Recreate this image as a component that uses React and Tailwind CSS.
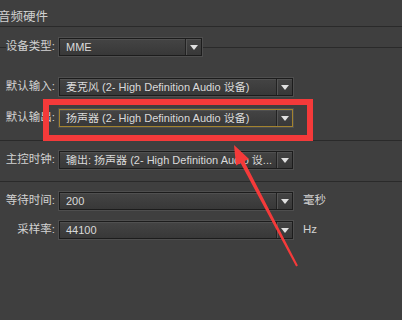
import React from 'react';

const font = { fontFamily: '"Liberation Sans", "Noto Sans CJK SC", sans-serif' };

function Select({ value, width = 'w-[234px]', active = false }) {
    return (
        <div
            className={`flex items-center h-[18px] ${width} border ${active ? 'border-[#a3832f]' : 'border-[#1c1c1c]'} bg-gradient-to-b from-[#444] to-[#383838] shadow-[0_0_0_1px_#4e4e4e,inset_0_1px_0_#505050]`}
        >
            <span className="flex-1 overflow-hidden whitespace-nowrap pl-[6px] text-[11px] leading-none text-[#dadada]">{value}</span>
            <div className="flex items-center justify-center w-[16px] h-full border-l border-[#222] shadow-[inset_1px_0_0_#555]">
                <div className="w-0 h-0 border-l-[4px] border-r-[4px] border-t-[5px] border-l-transparent border-r-transparent border-t-[#e0e0e0]" />
            </div>
        </div>
    );
}

function Row({ label, children, unit, className = '' }) {
    return (
        <div className={`flex items-center ${className}`}>
            <div className="w-[55px] text-right whitespace-nowrap text-[11.5px] text-[#d2d2d2] leading-none">{label}</div>
            <div className="ml-[4px]">{children}</div>
            {unit && <span className="ml-[10px] text-[11.5px] text-[#d2d2d2] leading-none">{unit}</span>}
        </div>
    );
}

export default function App() {
    return (
        <div className="relative w-[402px] h-[320px] overflow-hidden bg-[#3f3f3f]" style={font}>
            <div className="h-[27px] border-b border-[#2a2a2a] pt-[11px]">
                <span className="-ml-[2px] block text-[12.5px] leading-none text-[#d0d0d0]">音频硬件</span>
            </div>

            <div className="flex items-center mt-[11px]">
                <div className="w-[55px] flex items-center">
                    <div className="w-[7px] h-px bg-[#2a2a2a]" />
                    <div className="flex-1 text-right whitespace-nowrap text-[11.5px] text-[#d2d2d2] leading-none">设备类型:</div>
                </div>
                <div className="ml-[4px]">
                    <Select value="MME" width="w-[143px]" />
                </div>
                <div className="flex-1 h-px bg-[#2a2a2a] ml-px" />
            </div>

            <Row label="默认输入:" className="mt-[22px]">
                <Select value="麦克风 (2- High Definition Audio 设备)" />
            </Row>
            <Row label="默认输出:" className="mt-[13px]">
                <Select value="扬声器 (2- High Definition Audio 设备)" active />
            </Row>

            <div className="mt-[13px] h-px bg-[#2a2a2a]" />

            <Row label="主控时钟:" className="mt-[10px]">
                <Select value="输出: 扬声器 (2- High Definition Audio 设..." />
            </Row>

            <div className="mt-[12px] h-px bg-[#2a2a2a]" />

            <Row label="等待时间:" unit="毫秒" className="mt-[10px]">
                <Select value="200" />
            </Row>
            <Row label="采样率:" unit="Hz" className="mt-[11px]">
                <Select value="44100" />
            </Row>

            <div className="absolute left-[43px] top-[99px] w-[270px] h-[42px] border-[6px] border-[#f43a3a]" />

            <svg className="absolute left-0 top-0" width="402" height="320" viewBox="0 0 402 320">
                <polygon
                    points="234,145 249,159 244.2,161.3 297.9,265.5 296.1,266.5 240.6,163 236,165.5"
                    fill="#f43a3a"
                />
            </svg>
        </div>
    );
}
